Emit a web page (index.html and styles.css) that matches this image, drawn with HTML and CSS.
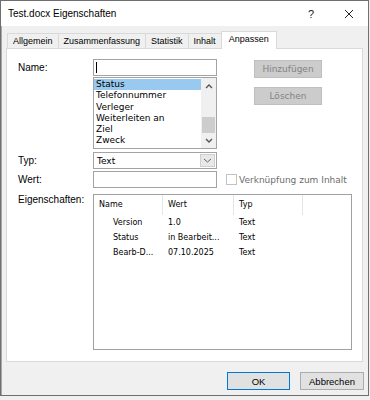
FILE: index.html
```html
<!DOCTYPE html>
<html lang="de">
<head>
    <meta charset="UTF-8">
    <title>Test.docx Eigenschaften</title>
    <link rel="stylesheet" href="styles.css">
</head>
<body>

<div class="dialog">
    <div class="titlebar">
        <span class="title">Test.docx Eigenschaften</span>
        <span class="caption-btn help">?</span>
        <span class="caption-btn">
            <svg width="10" height="10" viewBox="0 0 10 10"><path d="M1 1 L9 9 M9 1 L1 9" stroke="#222" stroke-width="1" fill="none"/></svg>
        </span>
    </div>

    <div class="tabs">
        <div class="tab">Allgemein</div>
        <div class="tab">Zusammenfassung</div>
        <div class="tab">Statistik</div>
        <div class="tab">Inhalt</div>
        <div class="tab active">Anpassen</div>
    </div>

    <div class="panel">
        <div class="name-row">
            <div class="label">Name:</div>
            <div class="name-col">
                <div class="textbox"><span class="caret"></span></div>
                <div class="listbox">
                    <ul class="items">
                        <li class="selected">Status</li>
                        <li>Telefonnummer</li>
                        <li>Verleger</li>
                        <li>Weiterleiten an</li>
                        <li>Ziel</li>
                        <li>Zweck</li>
                    </ul>
                    <div class="scrollbar">
                        <div class="sb-btn up">
                            <svg width="8" height="5" viewBox="0 0 8 5"><path d="M1 4 L4 1 L7 4" stroke="#555" stroke-width="1.4" fill="none"/></svg>
                        </div>
                        <div class="sb-track"><div class="sb-thumb"></div></div>
                        <div class="sb-btn down">
                            <svg width="8" height="5" viewBox="0 0 8 5"><path d="M1 1 L4 4 L7 1" stroke="#555" stroke-width="1.4" fill="none"/></svg>
                        </div>
                    </div>
                </div>
            </div>
            <div class="side-buttons">
                <button class="btn-disabled" disabled>Hinzufügen</button>
                <button class="btn-disabled" disabled>Löschen</button>
            </div>
        </div>

        <div class="row typ-row">
            <div class="label">Typ:</div>
            <div class="combo">
                <span class="combo-text">Text</span>
                <span class="combo-btn">
                    <svg width="9" height="5" viewBox="0 0 9 5"><path d="M1 1 L4.5 4 L8 1" stroke="#666" stroke-width="1" fill="none"/></svg>
                </span>
            </div>
        </div>

        <div class="row wert-row">
            <div class="label">Wert:</div>
            <div class="textbox"></div>
            <span class="checkbox"></span>
            <span class="check-label">Verknüpfung zum Inhalt</span>
        </div>

        <div class="props-row">
            <div class="label props-label">Eigenschaften:</div>
            <div class="listview">
                <div class="lv-header">
                    <div class="lv-cell c1">Name</div>
                    <div class="lv-cell c2">Wert</div>
                    <div class="lv-cell c3">Typ</div>
                    <div class="lv-cell c4"></div>
                </div>
                <div class="lv-row">
                    <div class="lv-cell c1 indent">Version</div>
                    <div class="lv-cell c2">1.0</div>
                    <div class="lv-cell c3">Text</div>
                </div>
                <div class="lv-row">
                    <div class="lv-cell c1 indent">Status</div>
                    <div class="lv-cell c2">in Bearbeit...</div>
                    <div class="lv-cell c3">Text</div>
                </div>
                <div class="lv-row">
                    <div class="lv-cell c1 indent">Bearb-D...</div>
                    <div class="lv-cell c2">07.10.2025</div>
                    <div class="lv-cell c3">Text</div>
                </div>
            </div>
        </div>
    </div>

    <div class="footer">
        <button class="btn default">OK</button>
        <button class="btn">Abbrechen</button>
    </div>
</div>

</body>
</html>
```

FILE: styles.css
```css
body {
    margin: 0;
    background-color: #f0f0f0;
    font-family: "Liberation Sans", Arial, sans-serif;
    font-size: 10px;
    color: #000;
}
.dialog {
    width: 369px;
    height: 396px;
    box-sizing: border-box;
    border: 1px solid #6f6f6f;
    box-shadow: inset 1px 0 0 #a8a8a8;
    background-color: #f0f0f0;
    display: flex;
    flex-direction: column;
}
.titlebar {
    height: 25px;
    flex: none;
    background-color: #fff;
    display: flex;
    align-items: center;
    padding-left: 7px;
}
.title {
    font-size: 10px;
    flex: 1;
}
.caption-btn {
    width: 38px;
    height: 25px;
    display: flex;
    align-items: center;
    justify-content: center;
}
.help {
    font-size: 11px;
    color: #222;
}
.tabs {
    display: flex;
    align-items: flex-end;
    height: 18px;
    margin: 5px 5px -1px 6px;
    position: relative;
    z-index: 1;
}
.tab {
    height: 15px;
    box-sizing: border-box;
    line-height: 14px;
    padding: 0 5px;
    font-size: 9px;
    border: 1px solid #d9d9d9;
    border-bottom: none;
    margin-left: -1px;
    margin-bottom: 1px;
    background-color: #f0f0f0;
}
.tab:first-child {
    margin-left: 0;
}
.tab.active {
    height: 18px;
    margin-bottom: 0;
    padding: 0 7px;
    line-height: 14px;
    background-color: #fff;
}
.panel {
    height: 314px;
    flex: none;
    box-sizing: border-box;
    margin: 0 5px;
    border: 1px solid #d9d9d9;
    background-color: #fff;
    padding: 10px 0 0 11px;
}
.label {
    width: 75px;
    flex: none;
    line-height: 17px;
}
.name-row {
    display: flex;
    height: 90px;
}
.name-col {
    width: 124px;
    display: flex;
    flex-direction: column;
    gap: 1px;
}
.textbox {
    width: 124px;
    height: 17px;
    box-sizing: border-box;
    border: 1px solid #a3a3a3;
    background-color: #fff;
    display: flex;
    align-items: center;
    padding-left: 2px;
}
.caret {
    width: 1px;
    height: 11px;
    background-color: #000;
}
.listbox {
    height: 72px;
    box-sizing: border-box;
    border: 1px solid #a3a3a3;
    display: flex;
}
.items {
    list-style: none;
    margin: 0;
    padding: 1px 0 0 0;
    flex: 1;
    font-family: "DejaVu Sans", Verdana, sans-serif;
    font-size: 9px;
}
.items li {
    height: 11.3px;
    line-height: 11.3px;
    padding-left: 2px;
}
.items li.selected {
    background-color: #99c9ef;
}
.scrollbar {
    width: 15px;
    background-color: #f0f0f0;
    display: flex;
    flex-direction: column;
}
.sb-btn {
    display: flex;
    align-items: center;
    justify-content: center;
}
.sb-btn.up {
    height: 17px;
}
.sb-btn.down {
    height: 15px;
}
.sb-track {
    flex: 1;
    display: flex;
    flex-direction: column;
    justify-content: flex-end;
    align-items: center;
}
.sb-thumb {
    width: 13px;
    height: 16px;
    background-color: #cdcdcd;
}
.side-buttons {
    margin-left: 37px;
    padding-top: 1px;
    display: flex;
    flex-direction: column;
    gap: 9px;
}
.btn-disabled {
    width: 68px;
    height: 18px;
    box-sizing: border-box;
    border: 1px solid #bfbfbf;
    background-color: #cccccc;
    color: #838383;
    font-family: "DejaVu Sans", Verdana, sans-serif;
    font-size: 9px;
    padding: 0;
}
.row {
    display: flex;
    align-items: center;
    height: 17px;
}
.typ-row {
    margin-top: 3px;
}
.wert-row {
    margin-top: 2px;
}
.combo {
    width: 124px;
    height: 17px;
    box-sizing: border-box;
    border: 1px solid #a3a3a3;
    display: flex;
    align-items: center;
    padding: 0 1px 0 3px;
}
.combo-text {
    flex: 1;
    font-family: "DejaVu Sans", Verdana, sans-serif;
    font-size: 9px;
}
.combo-btn {
    width: 15px;
    height: 13px;
    box-sizing: border-box;
    border: 1px solid #cfcfcf;
    background-color: #e8e8e8;
    display: flex;
    align-items: center;
    justify-content: center;
}
.checkbox {
    width: 11px;
    height: 11px;
    box-sizing: border-box;
    border: 1px solid #c3c3c3;
    margin-left: 9px;
    margin-right: 2px;
}
.check-label {
    font-family: "DejaVu Sans", Verdana, sans-serif;
    font-size: 9px;
    color: #6d6d6d;
}
.props-row {
    display: flex;
    margin-top: 6px;
}
.props-label {
    line-height: 12px;
}
.listview {
    width: 259px;
    height: 156px;
    box-sizing: border-box;
    border: 1px solid #a0a0a0;
    font-family: "DejaVu Sans", Verdana, sans-serif;
    font-size: 8px;
}
.lv-header {
    display: flex;
    height: 20px;
}
.lv-header .lv-cell {
    line-height: 20px;
    border-right: 1px solid #e5e5e5;
}
.lv-row {
    display: flex;
    height: 15px;
    line-height: 15px;
}
.lv-cell {
    box-sizing: border-box;
    padding-left: 5px;
    white-space: nowrap;
}
.c1 {
    width: 69px;
}
.c2 {
    width: 71px;
}
.c3 {
    width: 69px;
}
.c4 {
    flex: 1;
    border-right: none !important;
}
.lv-cell.indent {
    padding-left: 19px;
}
.footer {
    display: flex;
    justify-content: flex-end;
    gap: 10px;
    padding: 10px 4px 0 0;
}
.btn {
    width: 64px;
    height: 18px;
    box-sizing: border-box;
    border: 1px solid #adadad;
    background-color: #e1e1e1;
    font-family: "Liberation Sans", Arial, sans-serif;
    font-size: 9.5px;
    padding: 0;
    color: #000;
}
.btn.default {
    width: 63px;
    border-color: #0078d7;
}
```
